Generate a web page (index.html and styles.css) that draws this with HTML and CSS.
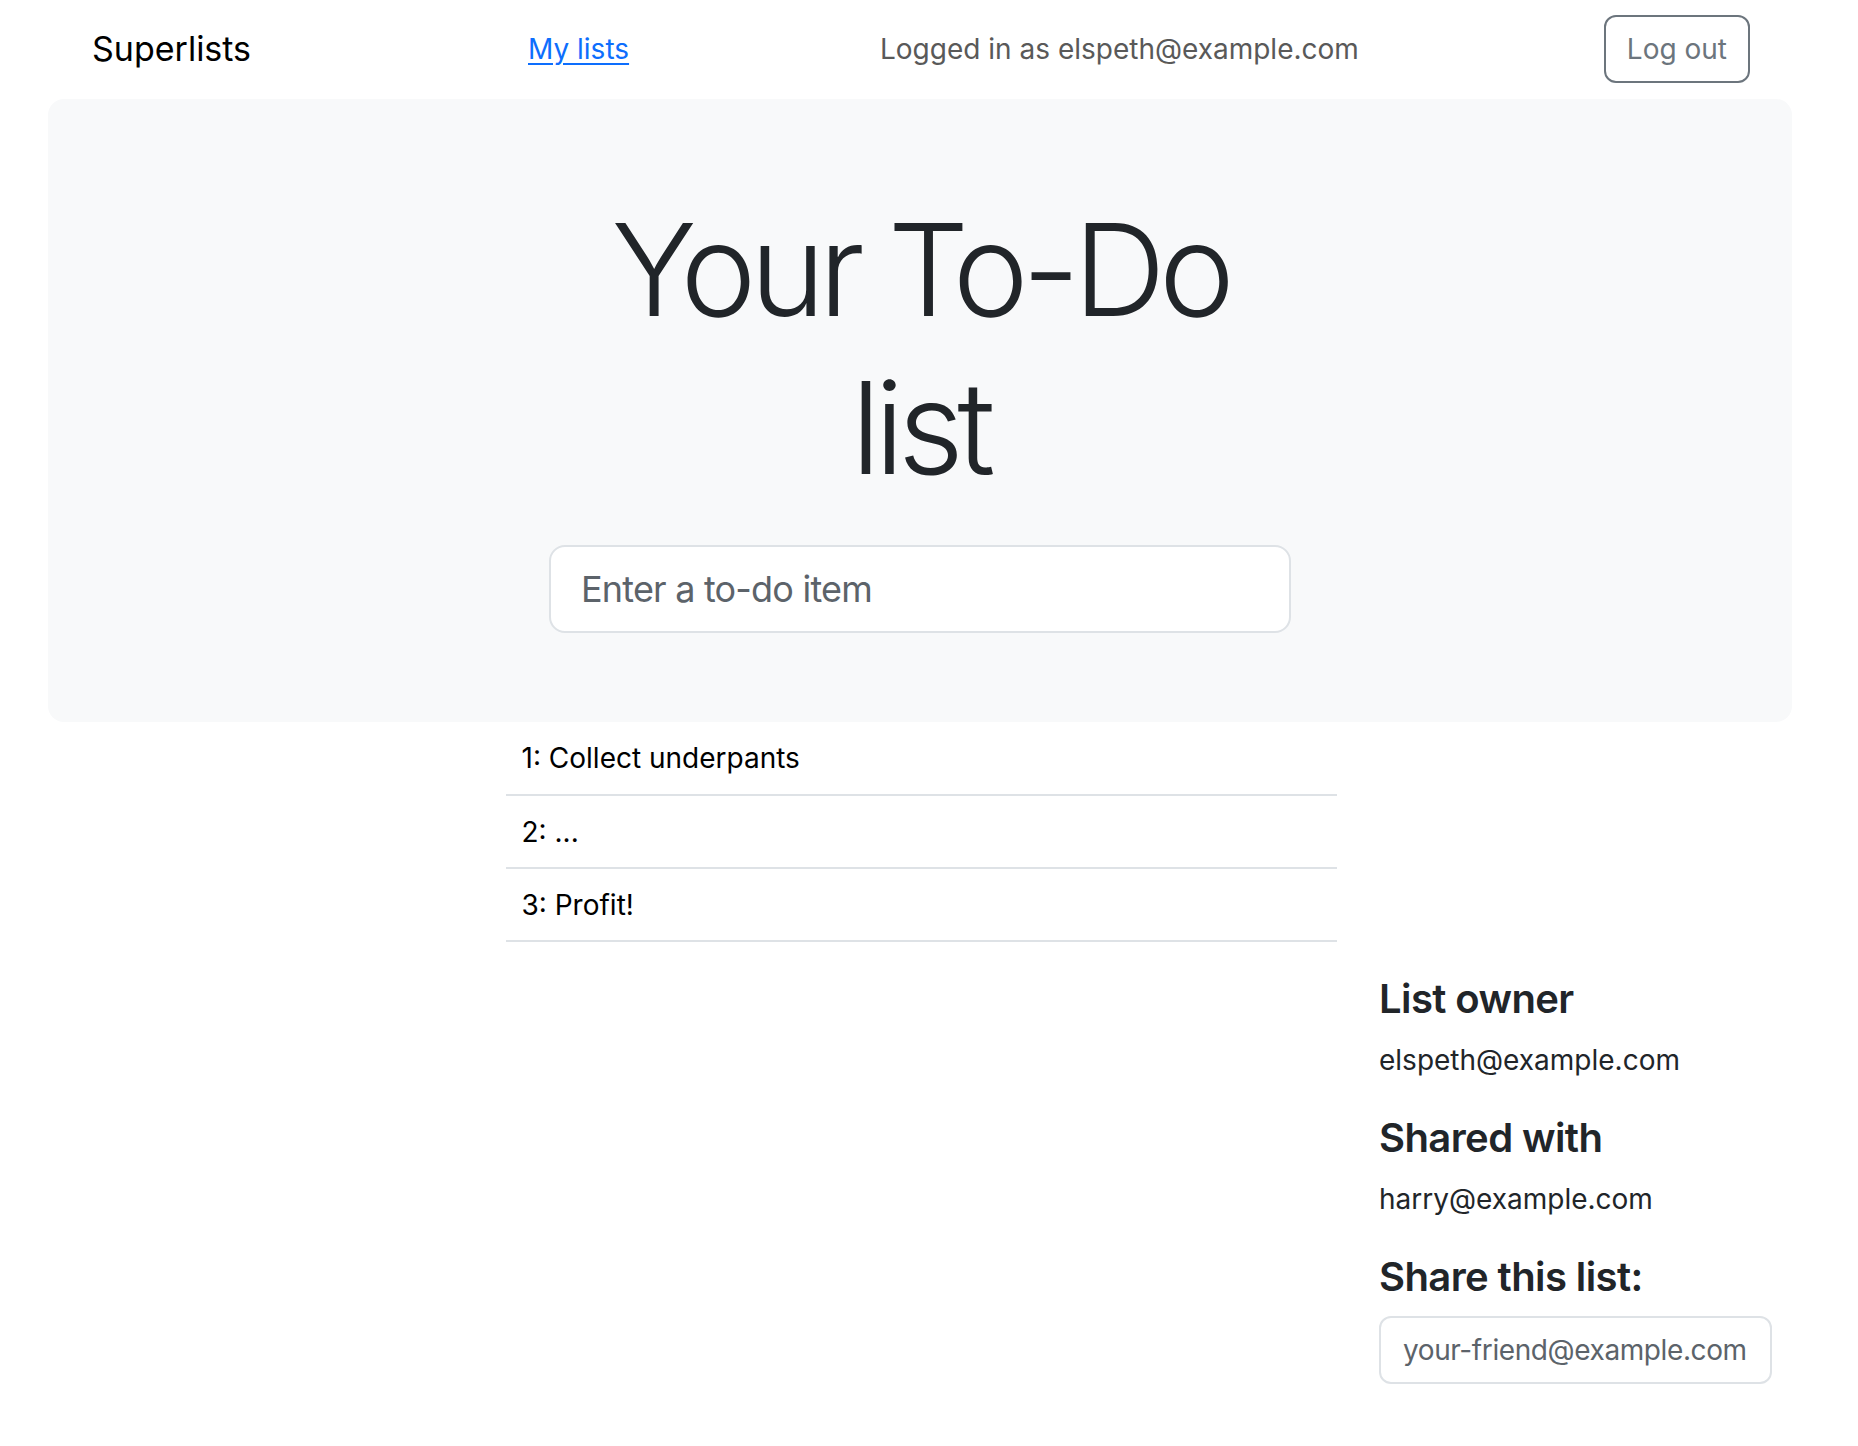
FILE: index.html
```html
<!DOCTYPE html>
<html lang="en">
<head>
<meta charset="utf-8">
<title>To-Do lists</title>
<link rel="stylesheet" href="styles.css">
</head>
<body>
<nav class="navbar">
  <a class="brand" href="#">Superlists</a>
  <a class="nav-link" href="#">My lists</a>
  <span class="nav-text">Logged in as elspeth@example.com</span>
  <button class="btn-logout" type="button">Log out</button>
</nav>

<section class="jumbotron">
  <div class="jumbo-col">
    <h1 class="display">Your To-Do list</h1>
    <input class="todo-input" type="text" placeholder="Enter a to-do item">
  </div>
</section>

<div class="list-row">
  <table class="list-table">
    <tbody>
      <tr><td>1: Collect underpants</td></tr>
      <tr><td>2: ...</td></tr>
      <tr><td>3: Profit!</td></tr>
    </tbody>
  </table>
</div>

<aside class="sidebar">
  <h2 class="side-title">List owner</h2>
  <p class="side-text">elspeth@example.com</p>
  <h2 class="side-title">Shared with</h2>
  <p class="side-text">harry@example.com</p>
  <h2 class="side-title">Share this list:</h2>
  <input class="share-input" type="text" placeholder="your-friend@example.com">
</aside>
</body>
</html>
```

FILE: styles.css
```css
* { box-sizing: border-box; }

body {
  margin: 0;
  font-family: Inter, "Noto Sans", sans-serif;
  color: #212529;
  background: #fff;
}

.navbar {
  display: grid;
  grid-template-columns: 436px 352px 1fr auto;
  align-items: center;
  padding: 15px 108px 16px 92px;
}

.brand {
  font-size: 34px;
  color: #000;
  text-decoration: none;
  line-height: 1.2;
}

.nav-link {
  font-size: 28px;
  color: #0d6efd;
  text-decoration: underline;
  text-underline-offset: 4px;
  text-decoration-thickness: 2px;
  justify-self: start;
}

.nav-text {
  font-size: 28px;
  color: #595959;
}

.btn-logout {
  font-family: inherit;
  font-size: 28px;
  color: #6c757d;
  background: #fff;
  border: 2px solid #6c757d;
  border-radius: 12px;
  height: 68px;
  padding: 0 21px;
  line-height: 1;
}

.jumbotron {
  margin: 0 66px 0 48px;
  background: #f8f9fa;
  border-radius: 16px;
  padding: 172px 0 89px;
  display: flex;
  justify-content: center;
}

.jumbo-col {
  width: 742px;
  display: flex;
  flex-direction: column;
  align-items: stretch;
}

.display {
  margin: -80px 0 38px;
  font-size: 128px;
  font-weight: 300;
  line-height: 158px;
  text-align: center;
  letter-spacing: -6.5px;
}

.todo-input {
  height: 88px;
  width: 100%;
  font-family: inherit;
  font-size: 36px;
  letter-spacing: -0.8px;
  padding: 0 30px;
  border: 2px solid #dee2e6;
  border-radius: 16px;
  background: #fff;
  color: #212529;
  outline: none;
}

.todo-input::placeholder { color: #5c636a; }

.list-row {
  display: flex;
  justify-content: center;
  padding-right: 16px;
}

.list-table {
  width: 831px;
  border-collapse: collapse;
}

.list-table td {
  font-size: 28px;
  color: #000;
  height: 73px;
  padding: 0 16px;
  border-bottom: 2px solid #dee2e6;
  vertical-align: middle;
}

.sidebar {
  margin-left: 1379px;
  margin-top: 33px;
  width: 440px;
}

.side-title {
  font-size: 40px;
  font-weight: 600;
  letter-spacing: -0.6px;
  line-height: 1.2;
  margin: 0 0 16px;
  color: #212529;
}

.side-text {
  font-size: 28px;
  line-height: 1.5;
  margin: 0 0 33px;
}

.share-input {
  width: 393px;
  height: 68px;
  margin-top: -1px;
  font-family: inherit;
  font-size: 28px;
  letter-spacing: -0.4px;
  padding: 0 22px;
  border: 2px solid #dee2e6;
  border-radius: 12px;
  background: #fff;
  outline: none;
}

.share-input::placeholder { color: #5c636a; }
```
